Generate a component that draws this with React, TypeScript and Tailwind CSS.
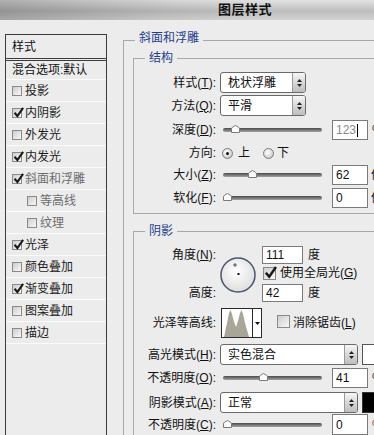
import React from "react";

function Box({ checked, big }: { checked?: boolean; big?: boolean }) {
  return (
    <span
      className={
        (big ? "w-[13px] h-[13px]" : "w-[10px] h-[10px]") +
        " relative inline-block shrink-0 border border-[#8a8a8a] bg-[linear-gradient(135deg,#cdcdcd,#f8f8f8)]"
      }
    >
      {checked && (
        <svg
          className={big ? "absolute left-[0px] top-[-2px]" : "absolute left-[0px] top-[-2px]"}
          width={big ? 13 : 11}
          height={big ? 13 : 11}
          viewBox="0 0 10 10"
        >
          <path d="M1.4 5.2 L4 8.2 L9.2 0.8" fill="none" stroke="#1a1a1a" strokeWidth={1.9} />
        </svg>
      )}
    </span>
  );
}

function SideRow({
  label,
  checked,
  indent,
  muted,
}: {
  label: string;
  checked?: boolean;
  indent?: boolean;
  muted?: boolean;
}) {
  return (
    <div
      className={
        "h-[22px] border-b border-[#fbfbfb] flex items-center " + (indent ? "pl-[21px]" : "pl-[6px]")
      }
    >
      <Box checked={checked} />
      <span className={"ml-[3px] text-[12px] " + (muted ? "text-[#6c6c6c]" : "text-[#1c1c1c]")}>{label}</span>
    </div>
  );
}

function Label({ children }: { children: React.ReactNode }) {
  return <div className="w-[82px] shrink-0 text-right text-[12px] text-[#111] whitespace-nowrap">{children}</div>;
}

function Slider({ knob }: { knob: string }) {
  return (
    <div className="relative w-[99px] h-[20px] flex items-center ml-[7px] shrink-0">
      <div className="w-full h-[4px] rounded-full bg-[linear-gradient(180deg,#4a4a4a,#a3a3a3)]" />
      <svg className={"absolute top-[5px] " + knob} width="9" height="8" viewBox="0 0 9 8">
        <path d="M0.5 7.5 V4 Q0.5 3 1.5 2.2 L4.5 0.5 L7.5 2.2 Q8.5 3 8.5 4 V7.5 Z" fill="#fbfbfb" stroke="#7a7a7a" />
      </svg>
    </div>
  );
}

function Field({
  value,
  w,
  h,
  muted,
  cursor,
}: {
  value: string;
  w: string;
  h: string;
  muted?: boolean;
  cursor?: boolean;
}) {
  return (
    <div
      className={
        "shrink-0 flex items-center border border-[#7b7b7b] bg-white pl-[3px] text-[12px] " +
        w +
        " " +
        h +
        (muted ? " text-[#8a8a8a]" : " text-[#111]")
      }
    >
      {value}
      {cursor && <span className="ml-[1px] w-[1px] h-[13px] bg-black" />}
    </div>
  );
}

function Select({ text, w }: { text: string; w: string }) {
  return (
    <div className={"ml-[4px] shrink-0 flex h-[21px] border border-[#6a6a6a] rounded-[3px] bg-white overflow-hidden " + w}>
      <div className="flex-1 flex items-center pl-[7px] text-[12px] text-[#111]">{text}</div>
      <div className="w-[13px] border-l border-[#9a9a9a] bg-[linear-gradient(180deg,#f6f6f6,#bdbdbd)] flex flex-col items-center justify-center gap-[2px]">
        <svg width="5" height="3" viewBox="0 0 5 3">
          <path d="M0 3 L2.5 0 L5 3Z" fill="#222" />
        </svg>
        <svg width="5" height="3" viewBox="0 0 5 3">
          <path d="M0 0 L2.5 3 L5 0Z" fill="#222" />
        </svg>
      </div>
    </div>
  );
}

function Radio({ checked }: { checked?: boolean }) {
  return (
    <span className="w-[11px] h-[11px] shrink-0 rounded-full border border-[#7a7a7a] bg-[radial-gradient(circle_at_40%_35%,#ffffff,#bcbcbc)] flex items-center justify-center">
      {checked && <span className="w-[3px] h-[3px] rounded-full bg-[#111]" />}
    </span>
  );
}

function Dial() {
  return (
    <svg width="36" height="36" viewBox="0 0 36 36">
      <defs>
        <radialGradient id="dialg" cx="45%" cy="40%" r="60%">
          <stop offset="0%" stopColor="#ffffff" />
          <stop offset="100%" stopColor="#dedede" />
        </radialGradient>
      </defs>
      <circle cx="18" cy="18" r="17" fill="url(#dialg)" stroke="#4a566e" strokeWidth="1.5" />
      <path d="M15 6 V10 M13 8 H17" stroke="#333" strokeWidth="0.8" />
      <rect x="17.5" y="16" width="2" height="2" fill="#111" />
    </svg>
  );
}

function Contour() {
  return (
    <div className="ml-[5px] shrink-0 w-[41px] h-[30px] border border-[#2a2a2a] bg-white flex">
      <div className="w-[30px] h-full">
        <svg width="30" height="28" viewBox="0 0 30 28">
          <path
            d="M2 28 L5 14 L7 4 L8.5 1 L10 5 L12 13 L14 18 L16 12 L18 4 L19.5 1 L21 5 L23 14 L27 28 Z"
            fill="#a9a699"
          />
        </svg>
      </div>
      <div className="flex-1 border-l border-[#2a2a2a] flex items-center justify-center">
        <svg width="5" height="3" viewBox="0 0 5 3">
          <path d="M0 0 L2.5 3 L5 0Z" fill="#111" />
        </svg>
      </div>
    </div>
  );
}

export default function App() {
  return (
    <div className="w-[374px] h-[435px] overflow-hidden bg-[#ececec] font-['Liberation_Sans','Noto_Sans_CJK_SC',sans-serif] text-[#111]">
      {/* title bar */}
      <div className="h-[20px] flex items-center pl-[218px] bg-[linear-gradient(90deg,rgba(0,0,0,0.22),rgba(0,0,0,0.05)_45%,rgba(0,0,0,0)_70%),linear-gradient(180deg,#e2e2e2,#bdbdbd_55%,#d3d3d3)]">
        <span className="text-[13px] font-bold text-[#111] tracking-[0.5px]">图层样式</span>
      </div>

      <div className="flex items-start">
        {/* sidebar */}
        <div className="ml-[5px] mt-[14px] w-[102px] h-[420px] shrink-0 border border-b-0 border-[#3c3c3c] bg-[#ececec]">
          <div className="h-[26px] pl-[6px] flex items-center border-b-[3px] border-double border-[#3c3c3c] text-[12px]">
            样式
          </div>
          <div className="h-[19px] pl-[6px] flex items-center border-b border-[#fbfbfb] text-[12px]">混合选项:默认</div>
          <SideRow label="投影" />
          <SideRow label="内阴影" checked />
          <SideRow label="外发光" />
          <SideRow label="内发光" checked />
          <SideRow label="斜面和浮雕" checked muted />
          <SideRow label="等高线" indent muted />
          <SideRow label="纹理" indent muted />
          <SideRow label="光泽" checked />
          <SideRow label="颜色叠加" />
          <SideRow label="渐变叠加" checked />
          <SideRow label="图案叠加" />
          <SideRow label="描边" />
        </div>

        {/* right panel */}
        <div className="ml-[16px] mt-[11px] w-[270px] shrink-0">
          <fieldset className="border-t border-l border-[#a8a8a8] pl-[9px]">
            <legend className="ml-[2px] px-[4px] pb-[4px] leading-[14px] text-[12px] text-[#1f3d8f]">斜面和浮雕</legend>

            <fieldset className="mt-[2px] border-t border-l border-b border-[#a8a8a8] pb-[5px]">
              <legend className="ml-[11px] px-[4px] leading-[14px] text-[12px] text-[#1f3d8f]">结构</legend>

              <div className="mt-[7px] flex items-center h-[21px]">
                <Label>
                  样式(<u>T</u>):
                </Label>
                <Select text="枕状浮雕" w="w-[86px]" />
              </div>
              <div className="mt-[2px] flex items-center h-[21px]">
                <Label>
                  方法(<u>Q</u>):
                </Label>
                <Select text="平滑" w="w-[86px]" />
              </div>
              <div className="mt-[4px] flex items-center h-[20px]">
                <Label>
                  深度(<u>D</u>):
                </Label>
                <Slider knob="left-[8px]" />
                <div className="ml-[10px]">
                  <Field value="123" w="w-[36px]" h="h-[20px]" muted cursor />
                </div>
                <span className="ml-[4px] text-[12px] text-[#333]">%</span>
              </div>
              <div className="mt-[3px] flex items-center h-[20px]">
                <Label>方向:</Label>
                <span className="ml-[6px]">
                  <Radio checked />
                </span>
                <span className="ml-[5px] text-[12px]">上</span>
                <span className="ml-[13px]">
                  <Radio />
                </span>
                <span className="ml-[3px] text-[12px]">下</span>
              </div>
              <div className="mt-[2px] flex items-center h-[20px]">
                <Label>
                  大小(<u>Z</u>):
                </Label>
                <Slider knob="left-[25px]" />
                <div className="ml-[10px]">
                  <Field value="62" w="w-[36px]" h="h-[20px]" />
                </div>
                <span className="ml-[3px] text-[12px] whitespace-nowrap">像素</span>
              </div>
              <div className="mt-[3px] flex items-center h-[20px]">
                <Label>
                  软化(<u>F</u>):
                </Label>
                <Slider knob="left-[0px]" />
                <div className="ml-[10px]">
                  <Field value="0" w="w-[36px]" h="h-[20px]" />
                </div>
                <span className="ml-[3px] text-[12px] whitespace-nowrap">像素</span>
              </div>
            </fieldset>

            <fieldset className="mt-[10px] border-t border-l border-[#a8a8a8]">
              <legend className="ml-[11px] px-[4px] leading-[14px] text-[12px] text-[#1f3d8f]">阴影</legend>

              <div className="mt-[8px] flex h-[56px]">
                <div className="w-[82px] shrink-0 flex flex-col justify-between items-end text-[12px]">
                  <span className="leading-[18px]">
                    角度(<u>N</u>):
                  </span>
                  <span className="leading-[18px]">高度:</span>
                </div>
                <div className="ml-[4px] pt-[11px] shrink-0">
                  <Dial />
                </div>
                <div className="ml-[6px] flex flex-col">
                  <div className="flex items-center h-[18px]">
                    <Field value="111" w="w-[41px]" h="h-[18px]" />
                    <span className="ml-[5px] text-[12px]">度</span>
                  </div>
                  <div className="mt-[2px] flex items-center h-[14px] ml-[1px]">
                    <Box checked big />
                    <span className="ml-[4px] text-[12px] whitespace-nowrap">
                      使用全局光(<u>G</u>)
                    </span>
                  </div>
                  <div className="mt-[4px] flex items-center h-[18px]">
                    <Field value="42" w="w-[41px]" h="h-[18px]" />
                    <span className="ml-[5px] text-[12px]">度</span>
                  </div>
                </div>
              </div>

              <div className="mt-[6px] flex items-center h-[30px]">
                <Label>光泽等高线:</Label>
                <Contour />
                <span className="ml-[15px]">
                  <Box big />
                </span>
                <span className="ml-[3px] text-[12px] whitespace-nowrap">
                  消除锯齿(<u>L</u>)
                </span>
              </div>

              <div className="mt-[6px] flex items-center h-[21px]">
                <Label>
                  高光模式(<u>H</u>):
                </Label>
                <Select text="实色混合" w="w-[138px]" />
                <div className="ml-[4px] w-[26px] h-[21px] shrink-0 bg-white border border-[#555]" />
              </div>
              <div className="mt-[3px] flex items-center h-[20px]">
                <Label>
                  不透明度(<u>O</u>):
                </Label>
                <Slider knob="left-[36px]" />
                <div className="ml-[10px]">
                  <Field value="41" w="w-[36px]" h="h-[20px]" />
                </div>
                <span className="ml-[4px] text-[12px] text-[#333]">%</span>
              </div>
              <div className="mt-[4px] flex items-center h-[21px]">
                <Label>
                  阴影模式(<u>A</u>):
                </Label>
                <Select text="正常" w="w-[138px]" />
                <div className="ml-[4px] w-[26px] h-[21px] shrink-0 bg-black border border-[#333]" />
              </div>
              <div className="mt-[1px] flex items-center h-[21px]">
                <Label>
                  不透明度(<u>C</u>):
                </Label>
                <Slider knob="left-[0px]" />
                <div className="ml-[10px]">
                  <Field value="0" w="w-[36px]" h="h-[21px]" />
                </div>
                <span className="ml-[4px] text-[12px] text-[#a04040]">%</span>
              </div>
            </fieldset>
          </fieldset>
        </div>
      </div>
    </div>
  );
}
